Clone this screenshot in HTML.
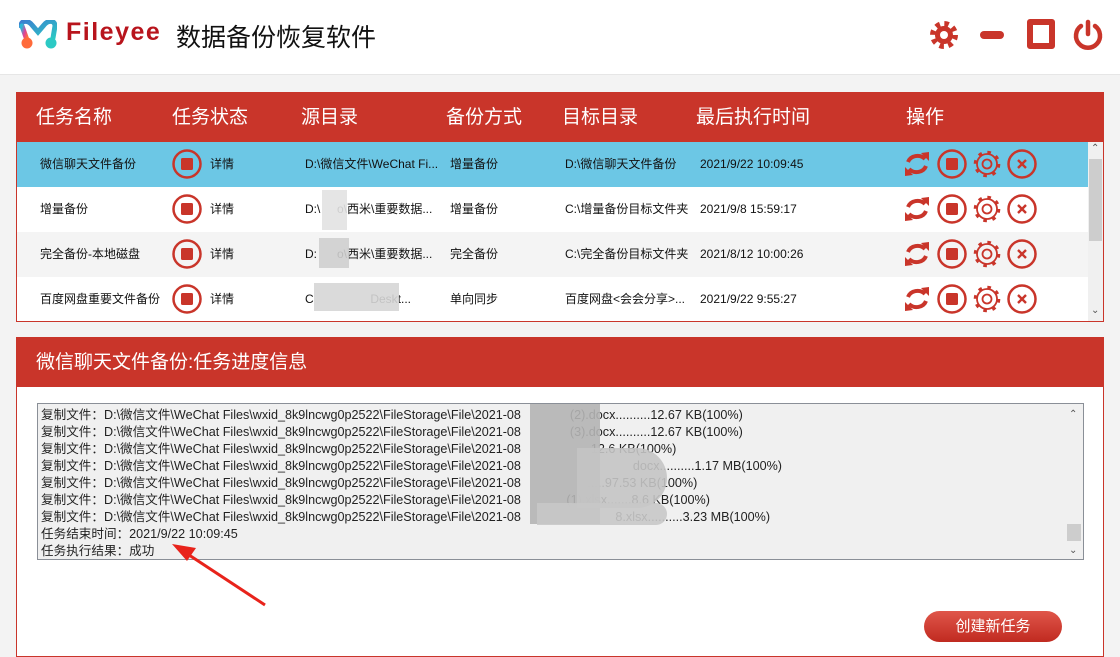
<!DOCTYPE html>
<html><head><meta charset="utf-8"><style>
*{margin:0;padding:0;box-sizing:border-box}
body{width:1120px;height:648px;overflow:hidden;background:#f3f3f3;font-family:"Liberation Sans","Noto Sans CJK SC",sans-serif;position:relative}
.abs{position:absolute}
#top{left:0;top:0;width:1120px;height:75px;background:#fff;border-bottom:1px solid #e6e6e6}
.panel{position:absolute;left:16px;width:1088px;border:1px solid #c9352a;background:#fff}
.th{position:absolute;top:0;height:49px;line-height:49px;color:#fff;font-size:19px}
.row{position:absolute;left:0;width:1071px;height:45px;font-size:12px;color:#111}
.row span{position:absolute;top:0;line-height:45px;white-space:nowrap}
.log div{height:17px;line-height:17px;font-size:12.6px;color:#222;white-space:nowrap}
.blur{position:absolute;background:#bdbdbd;opacity:.9}
</style></head><body>
<div id="top" class="abs"></div>
<svg class="abs" style="left:19px;top:20px" width="38" height="30" viewBox="0 0 38 30">
<defs><linearGradient id="g1" x1="0" y1="0" x2="1" y2="1"><stop offset="0" stop-color="#2bb8d8"/><stop offset=".5" stop-color="#e04098"/><stop offset="1" stop-color="#ff7a30"/></linearGradient>
<linearGradient id="g2" x1="0" y1="0" x2="1" y2="1"><stop offset="0" stop-color="#3a7fd0"/><stop offset="1" stop-color="#2cc9c4"/></linearGradient></defs>
<path d="M2 6 C2 0 9 0 13 5 L19 12 L25 5 C29 0 36 0 36 6 L34 18" stroke="url(#g2)" stroke-width="5" fill="none" stroke-linecap="round"/>
<path d="M3 6 L8 20" stroke="url(#g1)" stroke-width="5" fill="none" stroke-linecap="round"/>
<circle cx="8" cy="23" r="5.5" fill="#ff6a3a"/><circle cx="32" cy="23" r="5.5" fill="#2cc9c4"/>
</svg>
<div class="abs" style="left:66px;top:18px;font-size:25px;color:#b8141c;letter-spacing:1.5px;font-weight:bold">Fileyee</div>
<div class="abs" style="left:176px;top:18px;font-size:25px;color:#111">数据备份恢复软件</div>
<svg class="abs" style="left:928px;top:19px" width="32" height="32" viewBox="-16 -16 32 32">
<circle r="11" fill="none" stroke="#c9352a" stroke-width="6" stroke-dasharray="4.3 4.34"/>
<circle r="9" fill="#c9352a"/><circle r="4" fill="#fff"/></svg>
<div class="abs" style="left:980px;top:31px;width:24px;height:8px;border-radius:4px;background:#c9352a"></div>
<div class="abs" style="left:1027px;top:19px;width:28px;height:30px;border:6px solid #c9352a;border-radius:3px"></div>
<svg class="abs" style="left:1072px;top:19px" width="32" height="32" viewBox="0 0 32 32">
<path d="M9 7 A12 12 0 1 0 23 7" fill="none" stroke="#c9352a" stroke-width="4.5" stroke-linecap="round"/>
<line x1="16" y1="3" x2="16" y2="15" stroke="#c9352a" stroke-width="4.5" stroke-linecap="round"/></svg>

<div class="panel" style="top:92px;height:230px">
<div class="abs" style="left:0;top:0;width:1086px;height:49px;background:#c9352a"></div>
<div class="th" style="left:19px">任务名称</div><div class="th" style="left:155px">任务状态</div>
<div class="th" style="left:284px">源目录</div><div class="th" style="left:429px">备份方式</div>
<div class="th" style="left:545px">目标目录</div><div class="th" style="left:679px">最后执行时间</div>
<div class="th" style="left:889px">操作</div>

<div class="row" style="top:49px;background:#6cc7e5"><span style="left:23px">微信聊天文件备份</span><span style="left:193px">详情</span><span style="left:288px">D:\微信文件\WeChat Fi...</span><span style="left:433px">增量备份</span><span style="left:548px">D:\微信聊天文件备份</span><span style="left:683px">2021/9/22 10:09:45</span></div>
<div class="row" style="top:94px"><span style="left:23px">增量备份</span><span style="left:193px">详情</span><span style="left:288px">D:\&nbsp;&nbsp;&nbsp;&nbsp;&nbsp;o\西米\重要数据...</span><span style="left:433px">增量备份</span><span style="left:548px">C:\增量备份目标文件夹</span><span style="left:683px">2021/9/8 15:59:17</span></div>
<div class="row" style="top:139px;background:#f4f4f4"><span style="left:23px">完全备份-本地磁盘</span><span style="left:193px">详情</span><span style="left:288px">D:&nbsp;&nbsp;&nbsp;&nbsp;&nbsp;&nbsp;o\西米\重要数据...</span><span style="left:433px">完全备份</span><span style="left:548px">C:\完全备份目标文件夹</span><span style="left:683px">2021/8/12 10:00:26</span></div>
<div class="row" style="top:184px"><span style="left:23px">百度网盘重要文件备份</span><span style="left:193px">详情</span><span style="left:288px">C&nbsp;&nbsp;&nbsp;&nbsp;&nbsp;&nbsp;&nbsp;&nbsp;&nbsp;&nbsp;&nbsp;&nbsp;&nbsp;&nbsp;&nbsp;&nbsp;&nbsp;Deskt...</span><span style="left:433px">单向同步</span><span style="left:548px">百度网盘&lt;会会分享&gt;...</span><span style="left:683px">2021/9/22 9:55:27</span></div>
<div class="blur" style="left:305px;top:97px;width:25px;height:40px;background:#e2e2e2"></div>
<div class="blur" style="left:302px;top:145px;width:30px;height:30px;background:#cfcfcf"></div>
<div class="blur" style="left:297px;top:190px;width:85px;height:28px;background:#d6d6d6"></div>
<div class="abs" style="left:1071px;top:49px;width:15px;height:179px;background:#f0f0f0"></div>
<div class="abs" style="left:1072px;top:66px;width:13px;height:82px;background:#cdcdcd"></div>
<div class="abs" style="left:1074px;top:50px;font-size:10px;color:#555">&#8963;</div>
<div class="abs" style="left:1074px;top:212px;font-size:10px;color:#555">&#8964;</div>
</div>
<svg class="abs" style="left:0;top:0" width="1120" height="330">
<defs>
<g id="stop"><circle r="13.5" fill="none" stroke="#c9352a" stroke-width="2.5"/><rect x="-6" y="-6" width="12" height="12" rx="1.5" fill="#c9352a"/></g>
<g id="ops">
<g fill="none" stroke="#c9352a" stroke-width="4"><path d="M-9 -2 A10 9 0 0 1 8 -5"/><path d="M9 2 A10 9 0 0 1 -8 5"/></g>
<path d="M4 -11 L12 -3 L12 -12Z" fill="#c9352a"/><path d="M-4 11 L-12 3 L-12 12Z" fill="#c9352a"/>
<g transform="translate(35,0)"><circle r="13.5" fill="none" stroke="#c9352a" stroke-width="2.5"/><rect x="-6" y="-6" width="12" height="12" rx="1.5" fill="#c9352a"/></g>
<g transform="translate(70,0)"><circle r="11.8" fill="none" stroke="#c9352a" stroke-width="3" stroke-dasharray="3.6 5.67"/><circle r="10" fill="none" stroke="#c9352a" stroke-width="1.8"/><circle r="4.5" fill="none" stroke="#c9352a" stroke-width="1.8"/></g>
<g transform="translate(105,0)"><circle r="13.5" fill="none" stroke="#c9352a" stroke-width="2.5"/><path d="M-4 -4 L4 4 M4 -4 L-4 4" stroke="#c9352a" stroke-width="2.4"/></g>
</g></defs>
<use href="#stop" x="187" y="164"/><use href="#stop" x="187" y="209"/><use href="#stop" x="187" y="254"/><use href="#stop" x="187" y="299"/>
<use href="#ops" x="917" y="164"/><use href="#ops" x="917" y="209"/><use href="#ops" x="917" y="254"/><use href="#ops" x="917" y="299"/>
</svg>

<div class="panel" style="top:337px;height:320px">
<div class="abs" style="left:0;top:0;width:1086px;height:49px;background:#c9352a"></div>
<div class="th" style="left:19px">微信聊天文件备份:任务进度信息</div>
<div class="abs log" style="left:20px;top:65px;width:1047px;height:157px;background:#f0f0f0;border:1px solid #8a8f97;padding:3px 0 0 3px">
<div>复制文件：D:\微信文件\WeChat Files\wxid_8k9lncwg0p2522\FileStorage\File\2021-08&nbsp;&nbsp;&nbsp;&nbsp;&nbsp;&nbsp;&nbsp;&nbsp;&nbsp;&nbsp;&nbsp;&nbsp;&nbsp;&nbsp;(2).docx..........12.67 KB(100%)</div>
<div>复制文件：D:\微信文件\WeChat Files\wxid_8k9lncwg0p2522\FileStorage\File\2021-08&nbsp;&nbsp;&nbsp;&nbsp;&nbsp;&nbsp;&nbsp;&nbsp;&nbsp;&nbsp;&nbsp;&nbsp;&nbsp;&nbsp;(3).docx..........12.67 KB(100%)</div>
<div>复制文件：D:\微信文件\WeChat Files\wxid_8k9lncwg0p2522\FileStorage\File\2021-08&nbsp;&nbsp;&nbsp;&nbsp;&nbsp;&nbsp;&nbsp;&nbsp;&nbsp;&nbsp;&nbsp;&nbsp;&nbsp;&nbsp;&nbsp;&nbsp;&nbsp;&nbsp;&nbsp;&nbsp;12.6 KB(100%)</div>
<div>复制文件：D:\微信文件\WeChat Files\wxid_8k9lncwg0p2522\FileStorage\File\2021-08&nbsp;&nbsp;&nbsp;&nbsp;&nbsp;&nbsp;&nbsp;&nbsp;&nbsp;&nbsp;&nbsp;&nbsp;&nbsp;&nbsp;&nbsp;&nbsp;&nbsp;&nbsp;&nbsp;&nbsp;&nbsp;&nbsp;&nbsp;&nbsp;&nbsp;&nbsp;&nbsp;&nbsp;&nbsp;&nbsp;&nbsp;&nbsp;docx..........1.17 MB(100%)</div>
<div>复制文件：D:\微信文件\WeChat Files\wxid_8k9lncwg0p2522\FileStorage\File\2021-08&nbsp;&nbsp;&nbsp;&nbsp;&nbsp;&nbsp;&nbsp;&nbsp;&nbsp;&nbsp;&nbsp;&nbsp;&nbsp;&nbsp;&nbsp;&nbsp;&nbsp;&nbsp;&nbsp;.....97.53 KB(100%)</div>
<div>复制文件：D:\微信文件\WeChat Files\wxid_8k9lncwg0p2522\FileStorage\File\2021-08&nbsp;&nbsp;&nbsp;&nbsp;&nbsp;&nbsp;&nbsp;&nbsp;&nbsp;&nbsp;&nbsp;&nbsp;&nbsp;(1).xlsx.......8.6 KB(100%)</div>
<div>复制文件：D:\微信文件\WeChat Files\wxid_8k9lncwg0p2522\FileStorage\File\2021-08&nbsp;&nbsp;&nbsp;&nbsp;&nbsp;&nbsp;&nbsp;&nbsp;&nbsp;&nbsp;&nbsp;&nbsp;&nbsp;&nbsp;&nbsp;&nbsp;&nbsp;&nbsp;&nbsp;&nbsp;&nbsp;&nbsp;&nbsp;&nbsp;&nbsp;&nbsp;&nbsp;8.xlsx..........3.23 MB(100%)</div>
<div>任务结束时间：2021/9/22 10:09:45</div>
<div>任务执行结果：成功</div>
<div class="abs" style="left:1027px;top:0;width:18px;height:155px;background:#f0f0f0"></div>
<div class="abs" style="left:1029px;top:120px;width:14px;height:17px;background:#cdcdcd"></div>
<div class="abs" style="left:1031px;top:2px;font-size:10px;color:#555">&#8963;</div>
<div class="abs" style="left:1031px;top:138px;font-size:10px;color:#555">&#8964;</div>
</div>
<div class="blur" style="left:513px;top:66px;width:70px;height:120px;background:#b4b4b4"></div>
<div class="blur" style="left:560px;top:110px;width:90px;height:60px;background:#c4c4c4;border-radius:0 30px 30px 0"></div>
<div class="blur" style="left:520px;top:165px;width:130px;height:22px;background:#c8c8c8;border-radius:0 12px 12px 0"></div>
<div class="abs" style="left:907px;top:273px;width:138px;height:31px;border-radius:16px;background:linear-gradient(#e0564a,#c02a20);color:#fff;font-size:15px;text-align:center;line-height:31px">创建新任务</div>
</div>
<svg class="abs" style="left:0;top:0" width="1120" height="648"><line x1="265" y1="605" x2="186" y2="553" stroke="#e8231b" stroke-width="3"/><path d="M172 544 L196 548 L187 561Z" fill="#e8231b"/></svg>
</body></html>
